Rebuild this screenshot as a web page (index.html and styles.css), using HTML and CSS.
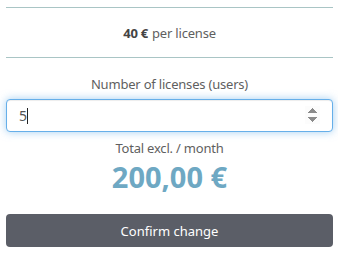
FILE: index.html
```html
<!DOCTYPE html>
<html lang="en">
<head>
    <meta charset="UTF-8">
    <title>Change licenses</title>
    <link rel="stylesheet" href="styles.css">
</head>
<body>

<div class="panel">
    <div class="price"><b>40 €</b> per license</div>

    <div class="field">
        <label for="licenses">Number of licenses (users)</label>
        <div class="input-wrap">
            <input type="number" id="licenses" value="5" min="1" autofocus>
            <span class="caret"></span>
        </div>
    </div>

    <div class="total">
        <div class="total-label">Total excl. / month</div>
        <div class="total-amount">200,00 €</div>
    </div>

    <button class="confirm">Confirm change</button>
</div>

</body>
</html>
```

FILE: styles.css
```css
body { margin: 0; font-family: "Noto Sans", sans-serif; color: #5f5f5f; background: #fff; }
.panel { padding: 7px 5px 0 6px; }
.price { border-top: 1px solid #a9c5c5; border-bottom: 1px solid #a9c5c5; height: 49px; display: flex; align-items: center; justify-content: center; font-size: 13px; gap: 4px; letter-spacing: -0.2px; }
.price b { color: #444; }
.field { margin-top: 17px; text-align: center; }
label { display: block; font-size: 13px; margin-bottom: 6px; letter-spacing: -0.2px; }
.input-wrap { position: relative; }
input { width: 100%; height: 33px; box-sizing: border-box; padding: 0 12px; font: inherit; font-size: 14px; color: #555; border: 1px solid #66afe9; border-radius: 4px; outline: none; box-shadow: inset 0 1px 1px rgba(0,0,0,.075), 0 0 8px rgba(102,175,233,.6); }
.caret { position: absolute; left: 21px; top: 9px; width: 1px; height: 16px; background: #222; }
.total { text-align: center; margin-top: 7px; }
.total-label { font-size: 13px; letter-spacing: -0.2px; }
.total-amount { font-size: 29px; font-weight: bold; color: #6ea8c3; line-height: 40px; }
.confirm { display: block; width: 100%; height: 33px; margin-top: 17px; background: #5b5e67; color: #fff; border: none; border-radius: 4px; font: inherit; font-size: 13px; cursor: pointer; }
```
